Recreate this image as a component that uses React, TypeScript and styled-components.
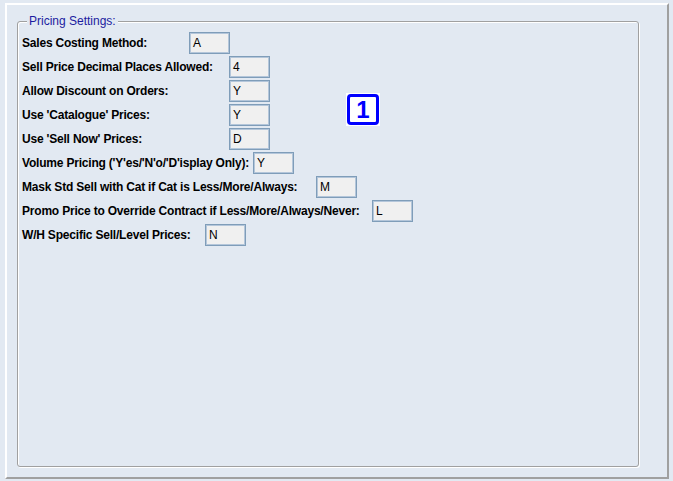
import React from "react";
import styled, { createGlobalStyle } from "styled-components";

const GlobalStyle = createGlobalStyle`
  html, body {
    margin: 0;
    padding: 0;
    background: #e2e9f2;
    font-family: "Liberation Sans", Arial, sans-serif;
  }
  * { box-sizing: border-box; }
`;

const Panel = styled.div`
  margin: 3px 0 0 5px;
  width: 664px;
  height: 476px;
  border: 2px solid;
  border-color: #ffffff #a0a0a0 #a0a0a0 #ffffff;
  background: #e2e9f2;
  padding: 9px 0 0 10px;
`;

const GroupBox = styled.fieldset`
  position: relative;
  margin: 0;
  width: 622px;
  height: 453px;
  border: 1px solid #a0a0a0;
  border-radius: 3px;
  box-shadow: 1px 1px 0 #ffffff, inset 1px 1px 0 #ffffff;
  padding: 3px 0 0 4px;
  min-width: 0;
`;

const Legend = styled.legend`
  margin-left: 5px;
  padding: 0 2px;
  font-size: 12px;
  line-height: 14px;
  color: #1c1ca0;
  background: #e2e9f2;
`;

const Row = styled.div`
  display: flex;
  align-items: center;
  height: 24px;
`;

const Label = styled.label<{ $w: number }>`
  width: ${(p) => p.$w}px;
  flex: none;
  font-size: 12px;
  font-weight: bold;
  letter-spacing: -0.2px;
  color: #000;
  white-space: nowrap;
`;

const Field = styled.div`
  width: 41px;
  height: 22px;
  border: 1px solid #7f9db9;
  box-shadow: inset 0 0 0 1px #b4c6da;
  background: #f0f0f0;
  font-size: 12px;
  color: #000;
  padding-left: 3px;
  display: flex;
  align-items: center;
`;

const Badge = styled.div`
  position: absolute;
  left: 328px;
  top: 65px;
  width: 34px;
  height: 33px;
  border: 1px solid #ffffff;
  background: #ffffff;
  display: flex;
  align-items: stretch;
`;

const BadgeInner = styled.div`
  flex: 1;
  border: 3px solid #0000ff;
  border-radius: 4px;
  background: #ffffff;
  color: #0000ff;
  font-family: "Liberation Sans", Arial, sans-serif;
  font-size: 24px;
  font-weight: bold;
  display: flex;
  align-items: center;
  justify-content: center;
  line-height: 1;
`;

const rows: { label: string; w: number; value: string }[] = [
  { label: "Sales Costing Method:", w: 167, value: "A" },
  { label: "Sell Price Decimal Places Allowed:", w: 207, value: "4" },
  { label: "Allow Discount on Orders:", w: 207, value: "Y" },
  { label: "Use 'Catalogue' Prices:", w: 207, value: "Y" },
  { label: "Use 'Sell Now' Prices:", w: 207, value: "D" },
  { label: "Volume Pricing ('Y'es/'N'o/'D'isplay Only):", w: 231, value: "Y" },
  { label: "Mask Std Sell with Cat if Cat is Less/More/Always:", w: 294, value: "M" },
  { label: "Promo Price to Override Contract if Less/More/Always/Never:", w: 350, value: "L" },
  { label: "W/H Specific Sell/Level Prices:", w: 183, value: "N" },
];

export default function App() {
  return (
    <>
      <GlobalStyle />
      <Panel>
        <GroupBox>
          <Legend>Pricing Settings:</Legend>
          {rows.map((r) => (
            <Row key={r.label}>
              <Label $w={r.w}>{r.label}</Label>
              <Field>{r.value}</Field>
            </Row>
          ))}
          <Badge>
            <BadgeInner>1</BadgeInner>
          </Badge>
        </GroupBox>
      </Panel>
    </>
  );
}
